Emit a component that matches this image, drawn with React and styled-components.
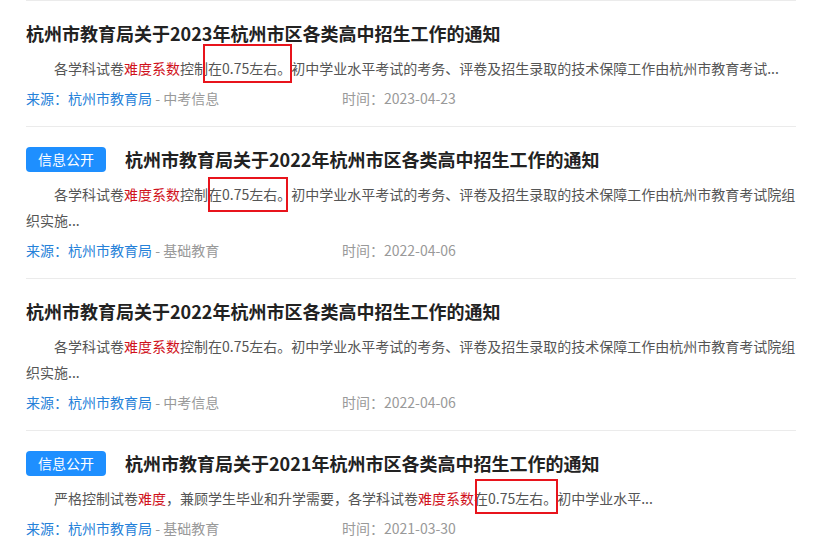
import React from 'react';
import styled, { createGlobalStyle } from 'styled-components';

const GlobalStyle = createGlobalStyle`
  html, body {
    margin: 0;
    padding: 0;
    background: #fff;
  }
  body {
    font-family: "Noto Sans CJK SC", "Noto Sans", sans-serif;
  }
`;

const articles = [
  {
    id: 1,
    title: '杭州市教育局关于2023年杭州市区各类高中招生工作的通知',
    parts: [
      { text: '各学科试卷' },
      { text: '难度系数', red: true },
      { text: '控制' },
      { text: '在0.75左右。', box: { t: -14, b: -5, l: -5, r: -1 } },
      { text: '初中学业水平考试的考务、评卷及招生录取的技术保障工作由杭州市教育考试...' },
    ],
    category: '中考信息',
    date: '2023-04-23',
  },
  {
    id: 2,
    tag: '信息公开',
    title: '杭州市教育局关于2022年杭州市区各类高中招生工作的通知',
    parts: [
      { text: '各学科试卷' },
      { text: '难度系数', red: true },
      { text: '控制' },
      { text: '在0.75左右。', box: { t: -7, b: -8, l: 0, r: 3 } },
      { text: '初中学业水平考试的考务、评卷及招生录取的技术保障工作由杭州市教育考试院组织实施...' },
    ],
    category: '基础教育',
    date: '2022-04-06',
  },
  {
    id: 3,
    title: '杭州市教育局关于2022年杭州市区各类高中招生工作的通知',
    parts: [
      { text: '各学科试卷' },
      { text: '难度系数', red: true },
      { text: '控制在0.75左右。初中学业水平考试的考务、评卷及招生录取的技术保障工作由杭州市教育考试院组织实施...' },
    ],
    category: '中考信息',
    date: '2022-04-06',
  },
  {
    id: 4,
    tag: '信息公开',
    title: '杭州市教育局关于2021年杭州市区各类高中招生工作的通知',
    parts: [
      { text: '严格控制试卷' },
      { text: '难度', red: true },
      { text: '，兼顾学生毕业和升学需要，各学科试卷' },
      { text: '难度系数', red: true },
      { text: '在0.75左右。', box: { t: -9, b: -6, l: 1, r: -1 } },
      { text: '初中学业水平...' },
    ],
    category: '基础教育',
    date: '2021-03-30',
  },
];

const NewsItem = ({ article }) => {
  const { tag, title, parts, category, date } = article;
  return (
    <St.Item>
      <St.TitleRow>
        {tag && <St.Tag>{tag}</St.Tag>}
        <St.Title>{title}</St.Title>
      </St.TitleRow>
      <St.Summary>
        {parts.map((p, i) => {
          if (p.red) return <St.Highlight key={i}>{p.text}</St.Highlight>;
          if (p.box)
            return (
              <St.Marked key={i} $t={p.box.t} $b={p.box.b} $l={p.box.l} $r={p.box.r}>
                {p.text}
              </St.Marked>
            );
          return <React.Fragment key={i}>{p.text}</React.Fragment>;
        })}
      </St.Summary>
      <St.Meta>
        <St.Source>
          <St.SourceLink>来源：杭州市教育局</St.SourceLink>
          <St.Category> - {category}</St.Category>
        </St.Source>
        <St.Time>时间：{date}</St.Time>
      </St.Meta>
    </St.Item>
  );
};

const App = () => (
  <>
    <GlobalStyle />
    <St.Page>
      <St.List>
        {articles.map((a) => (
          <NewsItem key={a.id} article={a} />
        ))}
      </St.List>
    </St.Page>
  </>
);

export default App;

const St = {
  Page: styled.div`
    padding: 0 27px 0 26px;
    width: 770px;
  `,
  List: styled.div`
    display: flex;
    flex-direction: column;
    border-top: 1px solid #ebebeb;
  `,
  Item: styled.div`
    display: flex;
    flex-direction: column;
    padding: 18px 0 18px;
    border-bottom: 1px solid #ebebeb;
  `,
  TitleRow: styled.div`
    display: flex;
    align-items: center;
    gap: 19px;
    height: 28px;
  `,
  Tag: styled.span`
    display: inline-flex;
    align-items: center;
    justify-content: center;
    width: 80px;
    height: 25px;

    border-radius: 4px;
    background-color: #1e8fff;
    color: #fff;
    font-size: 14px;
  `,
  Title: styled.h3`
    margin: 0;
    color: #222;
    font-size: 18px;
    font-weight: 700;
    line-height: 28px;
    white-space: nowrap;
  `,
  Summary: styled.p`
    margin: 8px 0 0;
    text-indent: 2em;

    color: #555;
    font-size: 14px;
    line-height: 26px;
  `,
  Highlight: styled.span`
    color: #d0111b;
  `,
  Marked: styled.span`
    position: relative;

    &::after {
      content: '';
      position: absolute;
      top: ${({ $t }) => $t}px;
      bottom: ${({ $b }) => $b}px;
      left: ${({ $l }) => $l}px;
      right: ${({ $r }) => $r}px;
      border: 2px solid #e8141c;
      pointer-events: none;
    }
  `,
  Meta: styled.div`
    display: flex;
    align-items: center;
    margin-top: 7px;
    height: 20px;
    font-size: 14px;
  `,
  Source: styled.div`
    width: 316px;
  `,
  SourceLink: styled.span`
    color: #2581d9;
  `,
  Category: styled.span`
    color: #999;
  `,
  Time: styled.span`
    color: #999;
  `,
};
